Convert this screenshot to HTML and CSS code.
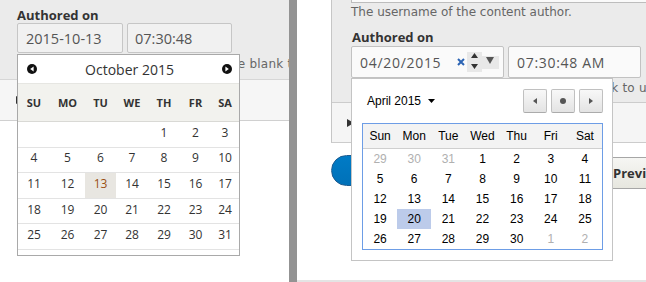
FILE: index.html
```html
<!DOCTYPE html>
<html lang="en">

<head>
    <meta charset="utf-8">
    <meta name="viewport" content="width=device-width, initial-scale=1.0">

    <title>Authored on</title>

    <link rel="stylesheet" href="styles.css">

</head>

<body>
    <div class="shots">

        <section class="shot shot-old">
            <div class="pane">
                <label class="label">Authored on</label>
                <div class="fields">
                    <div class="field field-date">2015-10-13</div>
                    <div class="field field-time">07:30:48</div>
                </div>
                <p class="desc desc-format">Format: 2015-10-13 07:30:48. Leave blank to use the time of form submission.</p>
            </div>
            <div class="summary"><span class="arrow"></span></div>

            <div class="picker-old">
                <div class="head">
                    <svg width="10" height="10" viewBox="0 0 10 10"><circle cx="5" cy="5" r="5" fill="#111"/><path d="M6.6 2.4v5.2L3.2 5z" fill="#fff"/></svg>
                    <span class="month">October 2015</span>
                    <svg width="10" height="10" viewBox="0 0 10 10"><circle cx="5" cy="5" r="5" fill="#111"/><path d="M3.4 2.4v5.2L6.8 5z" fill="#fff"/></svg>
                </div>
                <div class="names">
                    <span>SU</span><span>MO</span><span>TU</span><span>WE</span><span>TH</span><span>FR</span><span>SA</span>
                </div>
                <div class="week">
                    <span></span><span></span><span></span><span></span><span>1</span><span>2</span><span>3</span>
                </div>
                <div class="week">
                    <span>4</span><span>5</span><span>6</span><span>7</span><span>8</span><span>9</span><span>10</span>
                </div>
                <div class="week">
                    <span>11</span><span>12</span><span class="today">13</span><span>14</span><span>15</span><span>16</span><span>17</span>
                </div>
                <div class="week">
                    <span>18</span><span>19</span><span>20</span><span>21</span><span>22</span><span>23</span><span>24</span>
                </div>
                <div class="week">
                    <span>25</span><span>26</span><span>27</span><span>28</span><span>29</span><span>30</span><span>31</span>
                </div>
            </div>
        </section>

        <div class="divider"></div>

        <section class="shot shot-new">
            <div class="box">
                <div class="pane">
                    <div class="stub"></div>
                    <p class="desc desc-top">The username of the content author.</p>
                    <label class="label">Authored on</label>
                    <div class="fields">
                        <div class="field field-date">
                            <span>04/20/2015</span>
                            <span class="controls">
                                <svg class="clear" width="8" height="8" viewBox="0 0 8 8"><path d="M1 1l6 6M7 1L1 7" stroke="#2c64b4" stroke-width="2"/></svg>
                                <svg class="spin" width="15" height="20" viewBox="0 0 15 20"><path d="M4 6h7L7.5 1z M4 12h7L7.5 17z" fill="#333"/></svg>
                                <svg class="drop" width="17" height="13" viewBox="0 0 17 13"><path d="M4 1h8L8 8z" fill="#555"/></svg>
                            </span>
                        </div>
                        <div class="field field-time">07:30:48 AM</div>
                    </div>
                    <p class="desc desc-format">Format: 2015-04-20 07:30:48. Leave blank to use the time of form submission.</p>
                </div>
                <div class="summary"><span class="arrow"></span></div>
            </div>

            <div class="actions">
                <button class="btn btn-primary">Save and keep published</button>
                <button class="btn">Preview</button>
            </div>

            <div class="foot"></div>

            <div class="picker-new">
                <div class="head">
                    <span class="month">April 2015</span>
                    <svg width="7" height="4" viewBox="0 0 7 4"><path d="M0 0h7L3.5 4z" fill="#000"/></svg>
                    <div class="nav">
                        <button><svg width="4" height="6" viewBox="0 0 4 6"><path d="M4 0v6L0 3z" fill="#555"/></svg></button>
                        <button><svg width="6" height="6" viewBox="0 0 6 6"><circle cx="3" cy="3" r="3" fill="#555"/></svg></button>
                        <button><svg width="4" height="6" viewBox="0 0 4 6"><path d="M0 0v6L4 3z" fill="#555"/></svg></button>
                    </div>
                </div>
                <div class="cal">
                    <div class="names">
                        <span>Sun</span><span>Mon</span><span>Tue</span><span>Wed</span><span>Thu</span><span>Fri</span><span>Sat</span>
                    </div>
                    <div class="week">
                        <span class="other">29</span><span class="other">30</span><span class="other">31</span><span>1</span><span>2</span><span>3</span><span>4</span>
                    </div>
                    <div class="week">
                        <span>5</span><span>6</span><span>7</span><span>8</span><span>9</span><span>10</span><span>11</span>
                    </div>
                    <div class="week">
                        <span>12</span><span>13</span><span>14</span><span>15</span><span>16</span><span>17</span><span>18</span>
                    </div>
                    <div class="week">
                        <span>19</span><span class="selected">20</span><span>21</span><span>22</span><span>23</span><span>24</span><span>25</span>
                    </div>
                    <div class="week">
                        <span>26</span><span>27</span><span>28</span><span>29</span><span>30</span><span class="other">1</span><span class="other">2</span>
                    </div>
                </div>
            </div>
        </section>

    </div>
</body>

</html>
```

FILE: styles.css
```css
* {
    box-sizing: border-box;
}

body {
    margin: 0;
    background: #fff;
    color: #333;
    font-family: "DejaVu Sans", sans-serif;
}

.shots {
    display: flex;
    width: 646px;
    height: 282px;
    overflow: hidden;
}

.shot {
    position: relative;
    height: 282px;
    overflow: hidden;
}

.divider {
    flex: none;
    width: 8px;
    background: #939393;
}

.label {
    display: block;
    font-family: "Open Sans", sans-serif;
    font-weight: 700;
    font-size: 13px;
    line-height: 16px;
    color: #333;
}

.fields {
    display: flex;
}

.field {
    display: flex;
    align-items: center;
    border: 1px solid #c6c6c6;
    border-radius: 2px;
    font-family: "Open Sans", sans-serif;
    color: #555;
    white-space: nowrap;
}

.desc {
    margin: 0;
    font-size: 12px;
    line-height: 15px;
    color: #666;
    white-space: nowrap;
}

.desc-format {
    letter-spacing: 0.22px;
}

.arrow {
    width: 0;
    height: 0;
    border-left: 7px solid #333;
    border-top: 4px solid transparent;
    border-bottom: 4px solid transparent;
}

/* left: old jquery picker */

.shot-old {
    flex: none;
    width: 289px;
}

.shot-old .pane {
    height: 80px;
    padding: 7px 0 0 17px;
    background: #ebebeb;
    border-bottom: 1px solid #d6d6d6;
}

.shot-old .fields {
    gap: 4px;
}

.shot-old .field {
    height: 30px;
    padding-left: 8px;
    background: #f1f1f1;
    font-size: 14.5px;
}

.shot-old .field-date {
    width: 106px;
}

.shot-old .field-time {
    width: 105px;
    padding-left: 7px;
}

.shot-old .desc {
    margin-top: 4px;
}

.shot-old .summary {
    display: flex;
    align-items: center;
    height: 41px;
    padding-left: 16px;
    background: #f6f6f6;
    border-bottom: 1px solid #d0d0d0;
}

.picker-old {
    position: absolute;
    left: 17px;
    top: 54px;
    width: 223px;
    padding-bottom: 5px;
    background: #fff;
    border: 1px solid #a9a9a9;
    font-family: "Open Sans", sans-serif;
    color: #333;
}

.picker-old .head {
    display: flex;
    align-items: center;
    justify-content: space-between;
    height: 28px;
    padding: 0 7px 0 9px;
}

.picker-old .month {
    font-size: 14px;
}

.picker-old .names,
.picker-old .week {
    display: grid;
    grid-template-columns: 32px 35px 31px 32px 32px 31px 28px;
}

.picker-old .names {
    height: 39px;
    align-items: center;
    text-align: center;
    background: #f2f2ee;
    border-top: 1px solid #e6e6e2;
    border-bottom: 1px solid #d9d9d5;
    font-size: 11px;
    font-weight: 700;
}

.picker-old .week {
    height: 25.6px;
    border-bottom: 1px solid #e3e3e3;
    font-size: 12px;
}

.picker-old .week span {
    display: flex;
    align-items: center;
    justify-content: center;
    padding-bottom: 4px;
}

.picker-old .today {
    background: #e8e6e1;
    color: #9a4f12;
}

/* right: native chrome picker */

.shot-new {
    flex: 1;
    display: flex;
    flex-direction: column;
}

.box {
    margin-left: 34px;
    border-left: 1px solid #c6c6c6;
    border-bottom: 1px solid #cccccc;
}

.shot-new .pane {
    height: 103px;
    padding-left: 19px;
    background: #ebebeb;
    border-bottom: 1px solid #cccccc;
}

.stub {
    height: 3px;
    background: #fafafa;
    border-left: 1px solid #bdbdbd;
    border-bottom: 1px solid #bdbdbd;
}

.desc-top {
    margin-top: 2px;
}

.shot-new .label {
    margin-top: 9px;
    padding-left: 1px;
}

.shot-new .fields {
    gap: 4px;
    margin-top: 1px;
}

.shot-new .field {
    height: 32px;
    padding: 0 4px 0 8px;
    background: #fafafa;
    border-color: #c2c2c2;
    font-size: 14px;
    letter-spacing: 0.7px;
}

.shot-new .field-date {
    width: 153px;
}

.shot-new .field-time {
    width: 133px;
}

.controls {
    display: flex;
    align-items: center;
    margin-left: auto;
}

.clear {
    margin-right: 2px;
}

.spin {
    background: #e8e8e8;
}

.drop {
    background: #e8e8e8;
}

.shot-new .pane .desc-format {
    margin-top: 3px;
    padding-left: 1px;
}

.shot-new .summary {
    display: flex;
    align-items: center;
    height: 39px;
    padding-left: 15px;
    background: #f5f5f5;
}

.actions {
    display: flex;
    align-items: flex-start;
    gap: 19px;
    margin-top: 12px;
    padding-left: 34px;
}

.btn {
    flex: none;
    height: 32px;
    margin-top: 2px;
    padding: 0 22px;
    border: 1px solid #a6a6a6;
    border-radius: 20em;
    background: linear-gradient(#f6f6f3, #e7e7df);
    color: #333;
    font-family: "Open Sans", sans-serif;
    font-size: 13px;
    font-weight: 700;
    white-space: nowrap;
}

.btn-primary {
    width: 240px;
    height: 31px;
    margin-top: 0;
    border-color: #1e5c90;
    background: linear-gradient(#007bc6, #0071b8);
    color: #fff;
}

.foot {
    margin-top: auto;
    height: 2px;
    background: #e4e4e4;
}

.picker-new {
    position: absolute;
    left: 54px;
    top: 78px;
    width: 262px;
    height: 183px;
    padding: 10px 9px 10px 10px;
    background: #fff;
    border: 1px solid #c4c4c4;
    font-family: "Liberation Sans", Arial, sans-serif;
    font-size: 12px;
    color: #000;
}

.picker-new .head {
    display: flex;
    align-items: center;
    height: 24px;
    margin-bottom: 10px;
    padding-left: 5px;
}

.picker-new .month {
    margin-right: 7px;
}

.nav {
    display: flex;
    gap: 4px;
    margin-left: auto;
}

.nav button {
    display: flex;
    align-items: center;
    justify-content: center;
    width: 24px;
    height: 24px;
    padding: 0;
    border: 1px solid #c0c0c0;
    border-bottom-color: #ababab;
    border-radius: 2px;
    background: linear-gradient(#f8f8f8, #e3e3e3);
}

.cal {
    border: 1px solid #6d9de6;
}

.cal .names,
.cal .week {
    display: grid;
    grid-template-columns: repeat(7, 1fr);
    text-align: center;
}

.cal .names {
    height: 25px;
    align-items: center;
    background: #f3f3f3;
    border-bottom: 1px solid #cfcfcf;
}

.cal .week {
    height: 20px;
}

.cal .week span {
    line-height: 20px;
}

.cal .other {
    color: #b0b0b0;
}

.cal .selected {
    background: #bccbea;
}
```
